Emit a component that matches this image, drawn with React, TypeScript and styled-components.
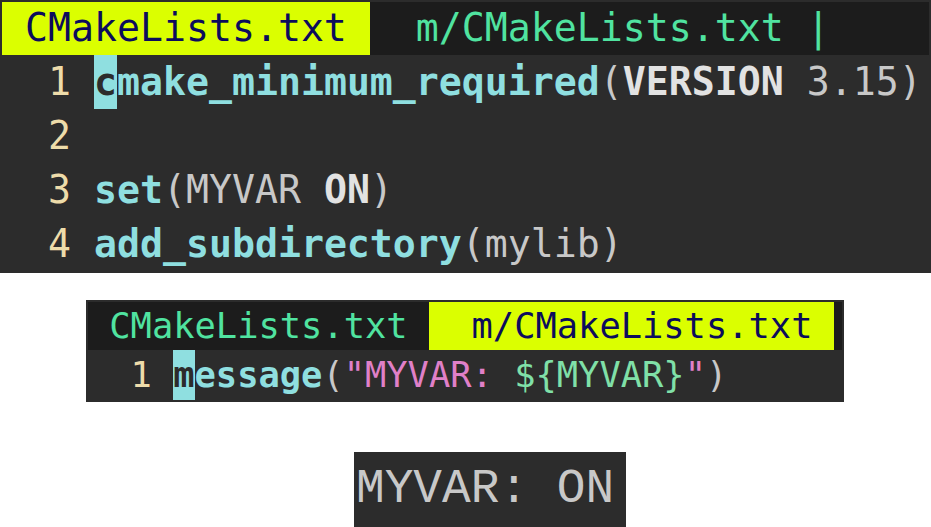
import React from "react";
import styled, { createGlobalStyle } from "styled-components";

const Global = createGlobalStyle`
  html, body { margin: 0; padding: 0; background: #ffffff; }
  #root { width: 931px; height: 527px; overflow: hidden; }
`;

const Page = styled.div`
  display: flex;
  flex-direction: column;
  align-items: flex-start;
  width: 931px;
  height: 527px;
  background: #ffffff;
`;

const Terminal = styled.div<{ $size: number; $width: number; $ml: number; $mt: number }>`
  box-sizing: border-box;
  width: ${(p) => p.$width}px;
  margin-left: ${(p) => p.$ml}px;
  margin-top: ${(p) => p.$mt}px;
  padding: 2px;
  background: #2c2c2c;
  font-family: "DejaVu Sans Mono", monospace;
  font-size: ${(p) => p.$size}px;
  white-space: pre;
  display: flex;
  flex-direction: column;
  overflow: hidden;
`;

const TabBar = styled.div<{ $h: number }>`
  display: flex;
  height: ${(p) => p.$h}px;
  line-height: ${(p) => p.$h}px;
  background: #1c1c1c;
`;

const Tab = styled.span<{ $active?: boolean }>`
  background: ${(p) => (p.$active ? "#dbff00" : "transparent")};
  color: ${(p) => (p.$active ? "#0c0c5c" : "#50e3a0")};
`;

const Line = styled.div<{ $h: number }>`
  height: ${(p) => p.$h}px;
  line-height: ${(p) => p.$h}px;
  color: #c8c8c8;
`;

const LineNo = styled.span`
  color: #eedcaa;
`;

const Cmd = styled.span`
  color: #8fdfe0;
  font-weight: bold;
`;

const Cursor = styled.span`
  display: inline-block;
  background: #8fdfe0;
  color: #2c2c2c;
  font-weight: bold;
`;

const Plain = styled.span`
  color: #c8c8c8;
`;

const Strong = styled.span`
  color: #e2e2e2;
  font-weight: bold;
`;

const Str = styled.span`
  color: #e080c8;
`;

const Var = styled.span`
  color: #80e0a8;
`;

const Output = styled.div`
  box-sizing: border-box;
  width: 272px;
  height: 75px;
  margin-left: 354px;
  margin-top: 50px;
  padding-left: 2px;
  background: #2c2c2c;
  color: #c8c8c8;
  font-family: "Liberation Mono", monospace;
  font-size: 47.8px;
  line-height: 75px;
  white-space: pre;
`;

export default function App() {
  return (
    <>
      <Global />
      <Page>
        <Terminal $size={38.2} $width={931} $ml={0} $mt={0}>
          <TabBar $h={53}>
            <Tab $active>{" CMakeLists.txt "}</Tab>
            <Tab>{"  m/CMakeLists.txt |"}</Tab>
          </TabBar>
          <Line $h={54}>
            <LineNo>{"  1 "}</LineNo>
            <Cursor>c</Cursor>
            <Cmd>make_minimum_required</Cmd>
            <Plain>(</Plain>
            <Strong>VERSION</Strong>
            <Plain>{" 3.15)"}</Plain>
          </Line>
          <Line $h={54}>
            <LineNo>{"  2 "}</LineNo>
          </Line>
          <Line $h={54}>
            <LineNo>{"  3 "}</LineNo>
            <Cmd>set</Cmd>
            <Plain>{"(MYVAR "}</Plain>
            <Strong>ON</Strong>
            <Plain>)</Plain>
          </Line>
          <Line $h={54}>
            <LineNo>{"  4 "}</LineNo>
            <Cmd>add_subdirectory</Cmd>
            <Plain>(mylib)</Plain>
          </Line>
        </Terminal>

        <Terminal $size={35.4} $width={758} $ml={86} $mt={27}>
          <TabBar $h={48}>
            <Tab>{" CMakeLists.txt "}</Tab>
            <Tab $active>{"  m/CMakeLists.txt "}</Tab>
          </TabBar>
          <Line $h={50}>
            <LineNo>{"  1 "}</LineNo>
            <Cursor>m</Cursor>
            <Cmd>essage</Cmd>
            <Plain>(</Plain>
            <Str>{"\"MYVAR: "}</Str>
            <Var>{"${MYVAR}"}</Var>
            <Str>{"\""}</Str>
            <Plain>)</Plain>
          </Line>
        </Terminal>

        <Output>MYVAR: ON</Output>
      </Page>
    </>
  );
}
